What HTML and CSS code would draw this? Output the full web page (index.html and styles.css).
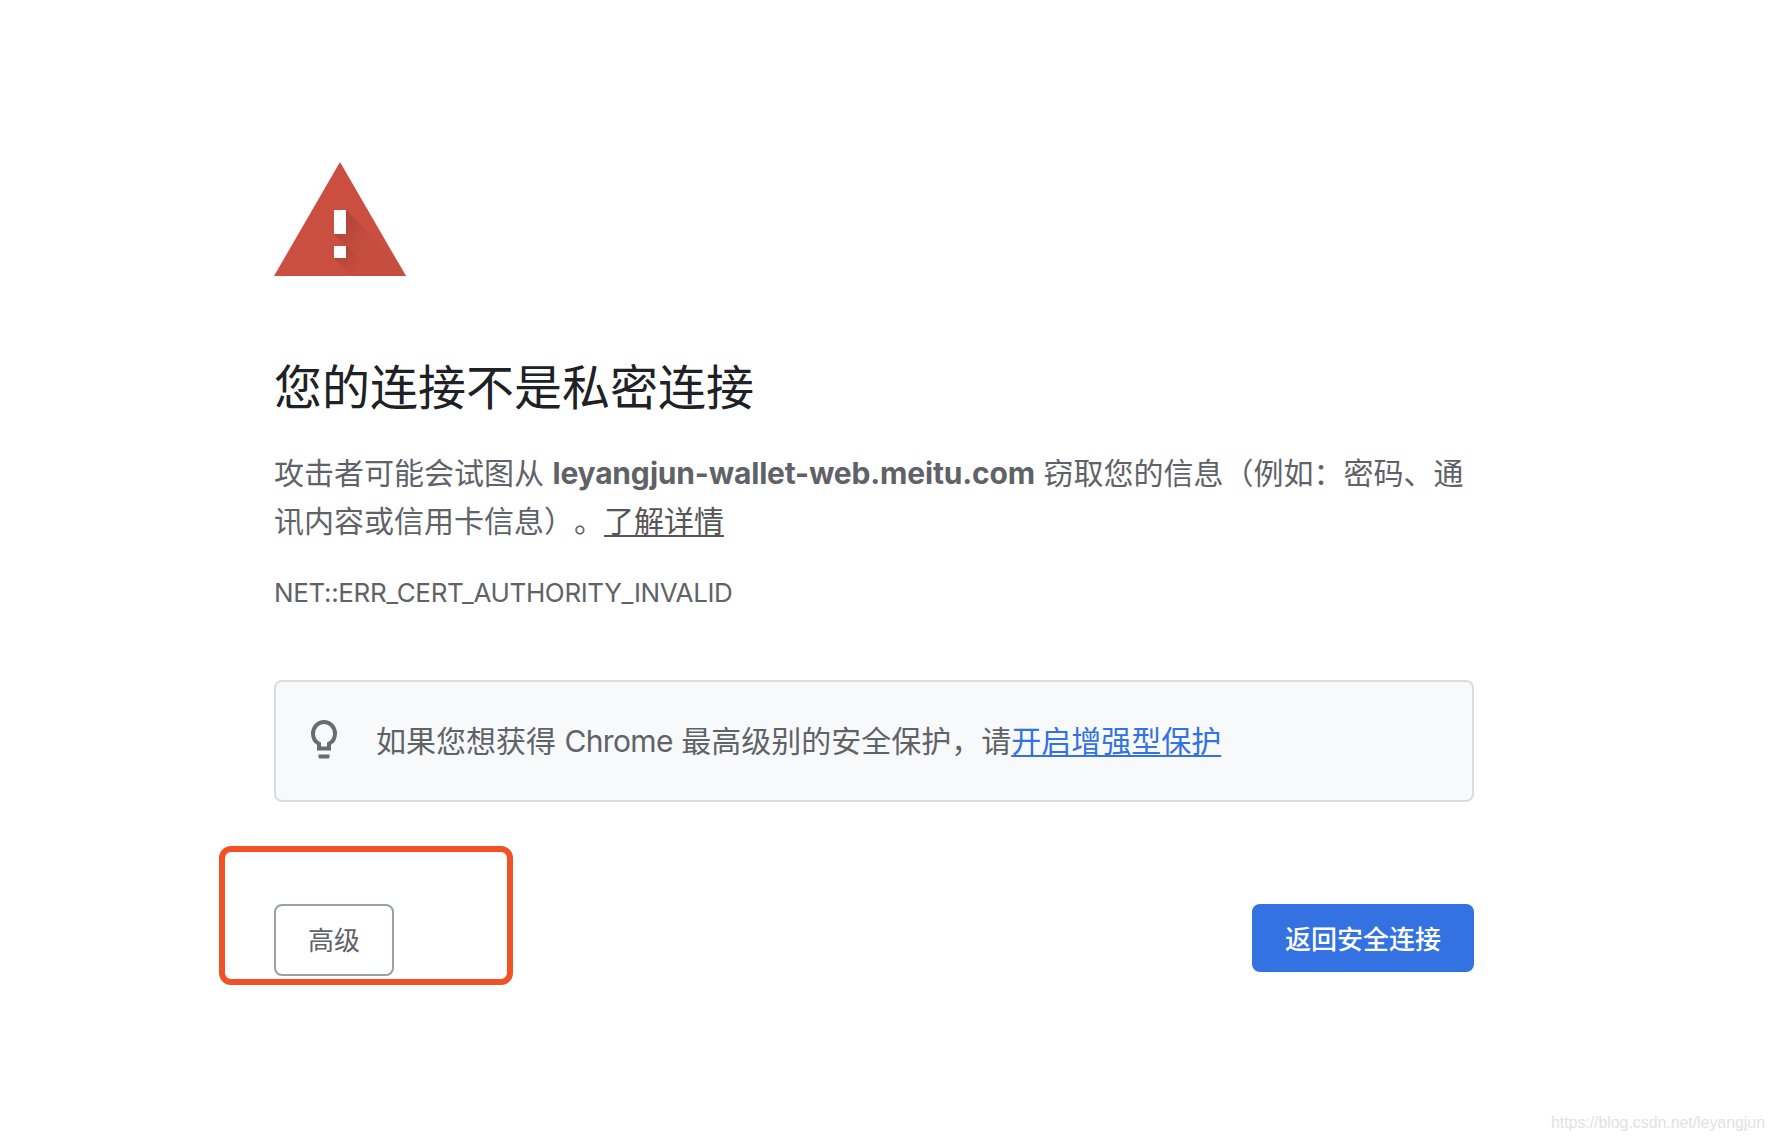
FILE: index.html
```html
<!DOCTYPE html>
<html lang="zh-CN">
<head>
<meta charset="utf-8">
<title>隐私设置错误</title>
<link rel="stylesheet" href="styles.css">
</head>
<body>
<main class="interstitial">
  <svg class="warning-icon" viewBox="0 0 132 114" width="132" height="114" aria-hidden="true">
    <defs>
      <linearGradient id="shade-bar" gradientUnits="userSpaceOnUse" x1="60" y1="48" x2="93" y2="81">
        <stop offset="0" stop-color="#a33b30" stop-opacity=".95"/>
        <stop offset=".5" stop-color="#b2443a" stop-opacity=".75"/>
        <stop offset="1" stop-color="#bd4c3e" stop-opacity=".4"/>
      </linearGradient>
      <linearGradient id="shade-dot" gradientUnits="userSpaceOnUse" x1="60" y1="84" x2="84" y2="108">
        <stop offset="0" stop-color="#a33b30" stop-opacity=".9"/>
        <stop offset="1" stop-color="#b8473b" stop-opacity=".2"/>
      </linearGradient>
      <clipPath id="triangle"><path d="M0 114 66 0l66 114z"/></clipPath>
    </defs>
    <path fill="#ca4f40" d="M0 114 66 0l66 114z"/>
    <g clip-path="url(#triangle)">
      <path fill="url(#shade-bar)" d="M72 48l66 66H102L60 72z"/>
      <path fill="url(#shade-dot)" d="M72 84l30 30H78L60 96z"/>
    </g>
    <path fill="#fff" d="M60 48h12v24H60zM60 84h12v12H60z"/>
  </svg>

  <h1 class="title">您的连接不是私密连接</h1>
  <p class="message">攻击者可能会试图从 <strong class="host">leyangjun-wallet-web.meitu.com</strong> 窃取您的信息（例如：密码、通讯内容或信用卡信息）。<a class="learn-more" href="#">了解详情</a></p>
  <div class="error-code"><span class="error-text">NET::ERR_CERT_AUTHORITY_INVALID</span></div>

  <section class="promo">
    <svg class="bulb" viewBox="0 0 26 39" width="26" height="39" aria-hidden="true">
      <path fill="none" stroke="#6b6b6b" stroke-width="4" d="M8 28.500V23.800C4 21.700 2 17.800 2 13.500a11 11.500 0 0 1 22 0c0 4.300-2 8.200-6 10.300v4.700z"/>
      <path fill="#6b6b6b" d="M7.500 34.500h11V37a1.500 1.500 0 0 1-1.500 1.500H9A1.500 1.500 0 0 1 7.500 37z"/>
    </svg>
    <p class="promo-text">如果您想获得 <span class="brand">Chrome</span> 最高级别的安全保护，请<a class="promo-link" href="#">开启增强型保护</a></p>
  </section>

  <div class="actions">
    <div class="highlighted">
      <button class="button secondary">高级</button>
      <span class="highlight"></span>
    </div>
    <button class="button primary">返回安全连接</button>
  </div>
</main>
<footer class="watermark"><span class="watermark-text">https://blog.csdn.net/leyangjun</span></footer>
</body>
</html>
```
FILE: styles.css
```css
* {
  box-sizing: border-box;
}

body {
  margin: 0;
  height: 1140px;
  display: flex;
  flex-direction: column;
  justify-content: space-between;
  overflow: hidden;
  background: #fff;
  color: #5f6368;
  font-family: Inter, "Noto Sans CJK SC", sans-serif;
  text-spacing-trim: space-all;
}

.interstitial {
  width: 1200px;
  margin-left: 274px;
  padding-top: 162px;
}

.warning-icon {
  display: block;
}

.title {
  margin: 83px 0 0;
  color: #202124;
  font-size: 48px;
  font-weight: 400;
  line-height: 58px;
}

.message {
  margin: 32px 0 0;
  font-size: 30px;
  line-height: 48px;
}

.host {
  font-weight: 700;
  letter-spacing: -0.18px;
}

.learn-more {
  color: #555;
  text-decoration: underline;
  text-decoration-thickness: 2px;
  text-underline-offset: 3px;
  text-decoration-skip-ink: none;
}

.error-code {
  margin-top: 24px;
  font-size: 26px;
  line-height: 48px;
  letter-spacing: -0.365px;
}

.promo {
  display: flex;
  align-items: center;
  height: 122px;
  margin-top: 63px;
  padding-left: 35px;
  border: 2px solid #dadce0;
  border-radius: 8px;
  background: #f8f9fb;
}

.bulb {
  flex: none;
  margin: -3px 39px 0 0;
}

.promo-text {
  margin: 0;
  font-size: 30px;
  line-height: 48px;
}

.brand {
  letter-spacing: -0.65px;
}

.promo-link {
  color: #3372e0;
  text-decoration: underline;
  text-decoration-thickness: 2px;
  text-underline-offset: 3px;
  text-decoration-skip-ink: none;
}

.actions {
  display: flex;
  justify-content: space-between;
  align-items: flex-start;
  margin-top: 102px;
}

.highlighted {
  position: relative;
}

.highlight {
  position: absolute;
  left: -55.500px;
  top: -58px;
  width: 294.500px;
  height: 139px;
  border: 6px solid #f05125;
  border-radius: 12px;
  pointer-events: none;
}

.button {
  display: block;
  margin: 0;
  padding: 0;
  border-radius: 8px;
  font-family: inherit;
  font-size: 26px;
}

.secondary {
  width: 120px;
  height: 72px;
  padding-bottom: 3px;
  border: 2px solid #9aa0a6;
  background: #fff;
  color: #5f6368;
}

.primary {
  width: 222px;
  height: 68px;
  padding-bottom: 2px;
  border: 0;
  background: #3372e0;
  color: #fff;
  font-weight: 500;
}

.watermark {
  padding: 0 9px 7px 0;
  color: #e2e2e2;
  font: 16px/20px "Liberation Sans", Arial, sans-serif;
  letter-spacing: -0.07px;
  text-align: right;
}
```
